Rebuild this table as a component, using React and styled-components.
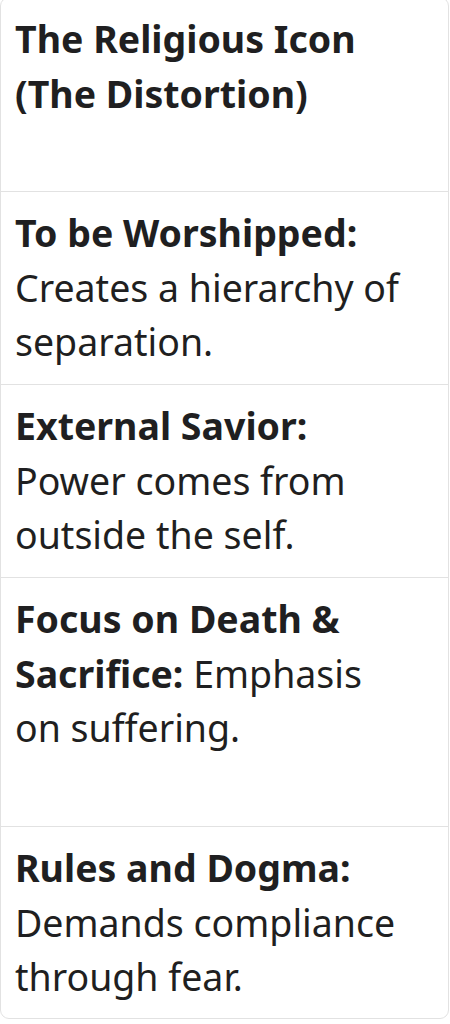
import styled, { createGlobalStyle } from "styled-components";

const GlobalStyle = createGlobalStyle`
  html, body {
    margin: 0;
    padding: 0;
    background: #ffffff;
  }
  body {
    font-family: "Noto Sans", "Open Sans", sans-serif;
    color: #1f1f21;
    overflow: hidden;
  }
`;

const rows = [
  { label: "To be Worshipped:", text: "Creates a hierarchy of separation.", h: 192 },
  { label: "External Savior:", text: "Power comes from outside the self.", h: 192 },
  { label: "Focus on Death & Sacrifice:", text: "Emphasis on suffering.", h: 248 },
  { label: "Rules and Dogma:", text: "Demands compliance through fear.", h: 191 },
];

export default function App() {
  return (
    <>
      <GlobalStyle />
      <Table>
        <HeadCell $h={193}>
          The Religious Icon
          <br />
          (The Distortion)
        </HeadCell>
        {rows.map((r, i) => (
          <Cell key={i} $h={r.h} $last={i === rows.length - 1}>
            <Label>{r.label}</Label> {r.text}
          </Cell>
        ))}
      </Table>
    </>
  );
}

const Table = styled.div`
  display: flex;
  flex-direction: column;
  width: 449px;
  margin-top: -3px;
  box-sizing: border-box;
  border: 1px solid #e2e2e2;
  border-radius: 9px;
  overflow: hidden;
`;

const Cell = styled.div`
  box-sizing: border-box;
  height: ${(p) => (p.$last ? p.$h : p.$h + 1)}px;
  padding: 14px 34px 14px 14px;
  font-size: 37.5px;
  line-height: 54.5px;
  font-weight: 400;
  color: #1f1f21;
  border-bottom: ${(p) => (p.$last ? "none" : "1px solid #e2e2e2")};
`;

const HeadCell = styled(Cell)`
  font-weight: 700;
`;

const Label = styled.strong`
  font-weight: 700;
`;
